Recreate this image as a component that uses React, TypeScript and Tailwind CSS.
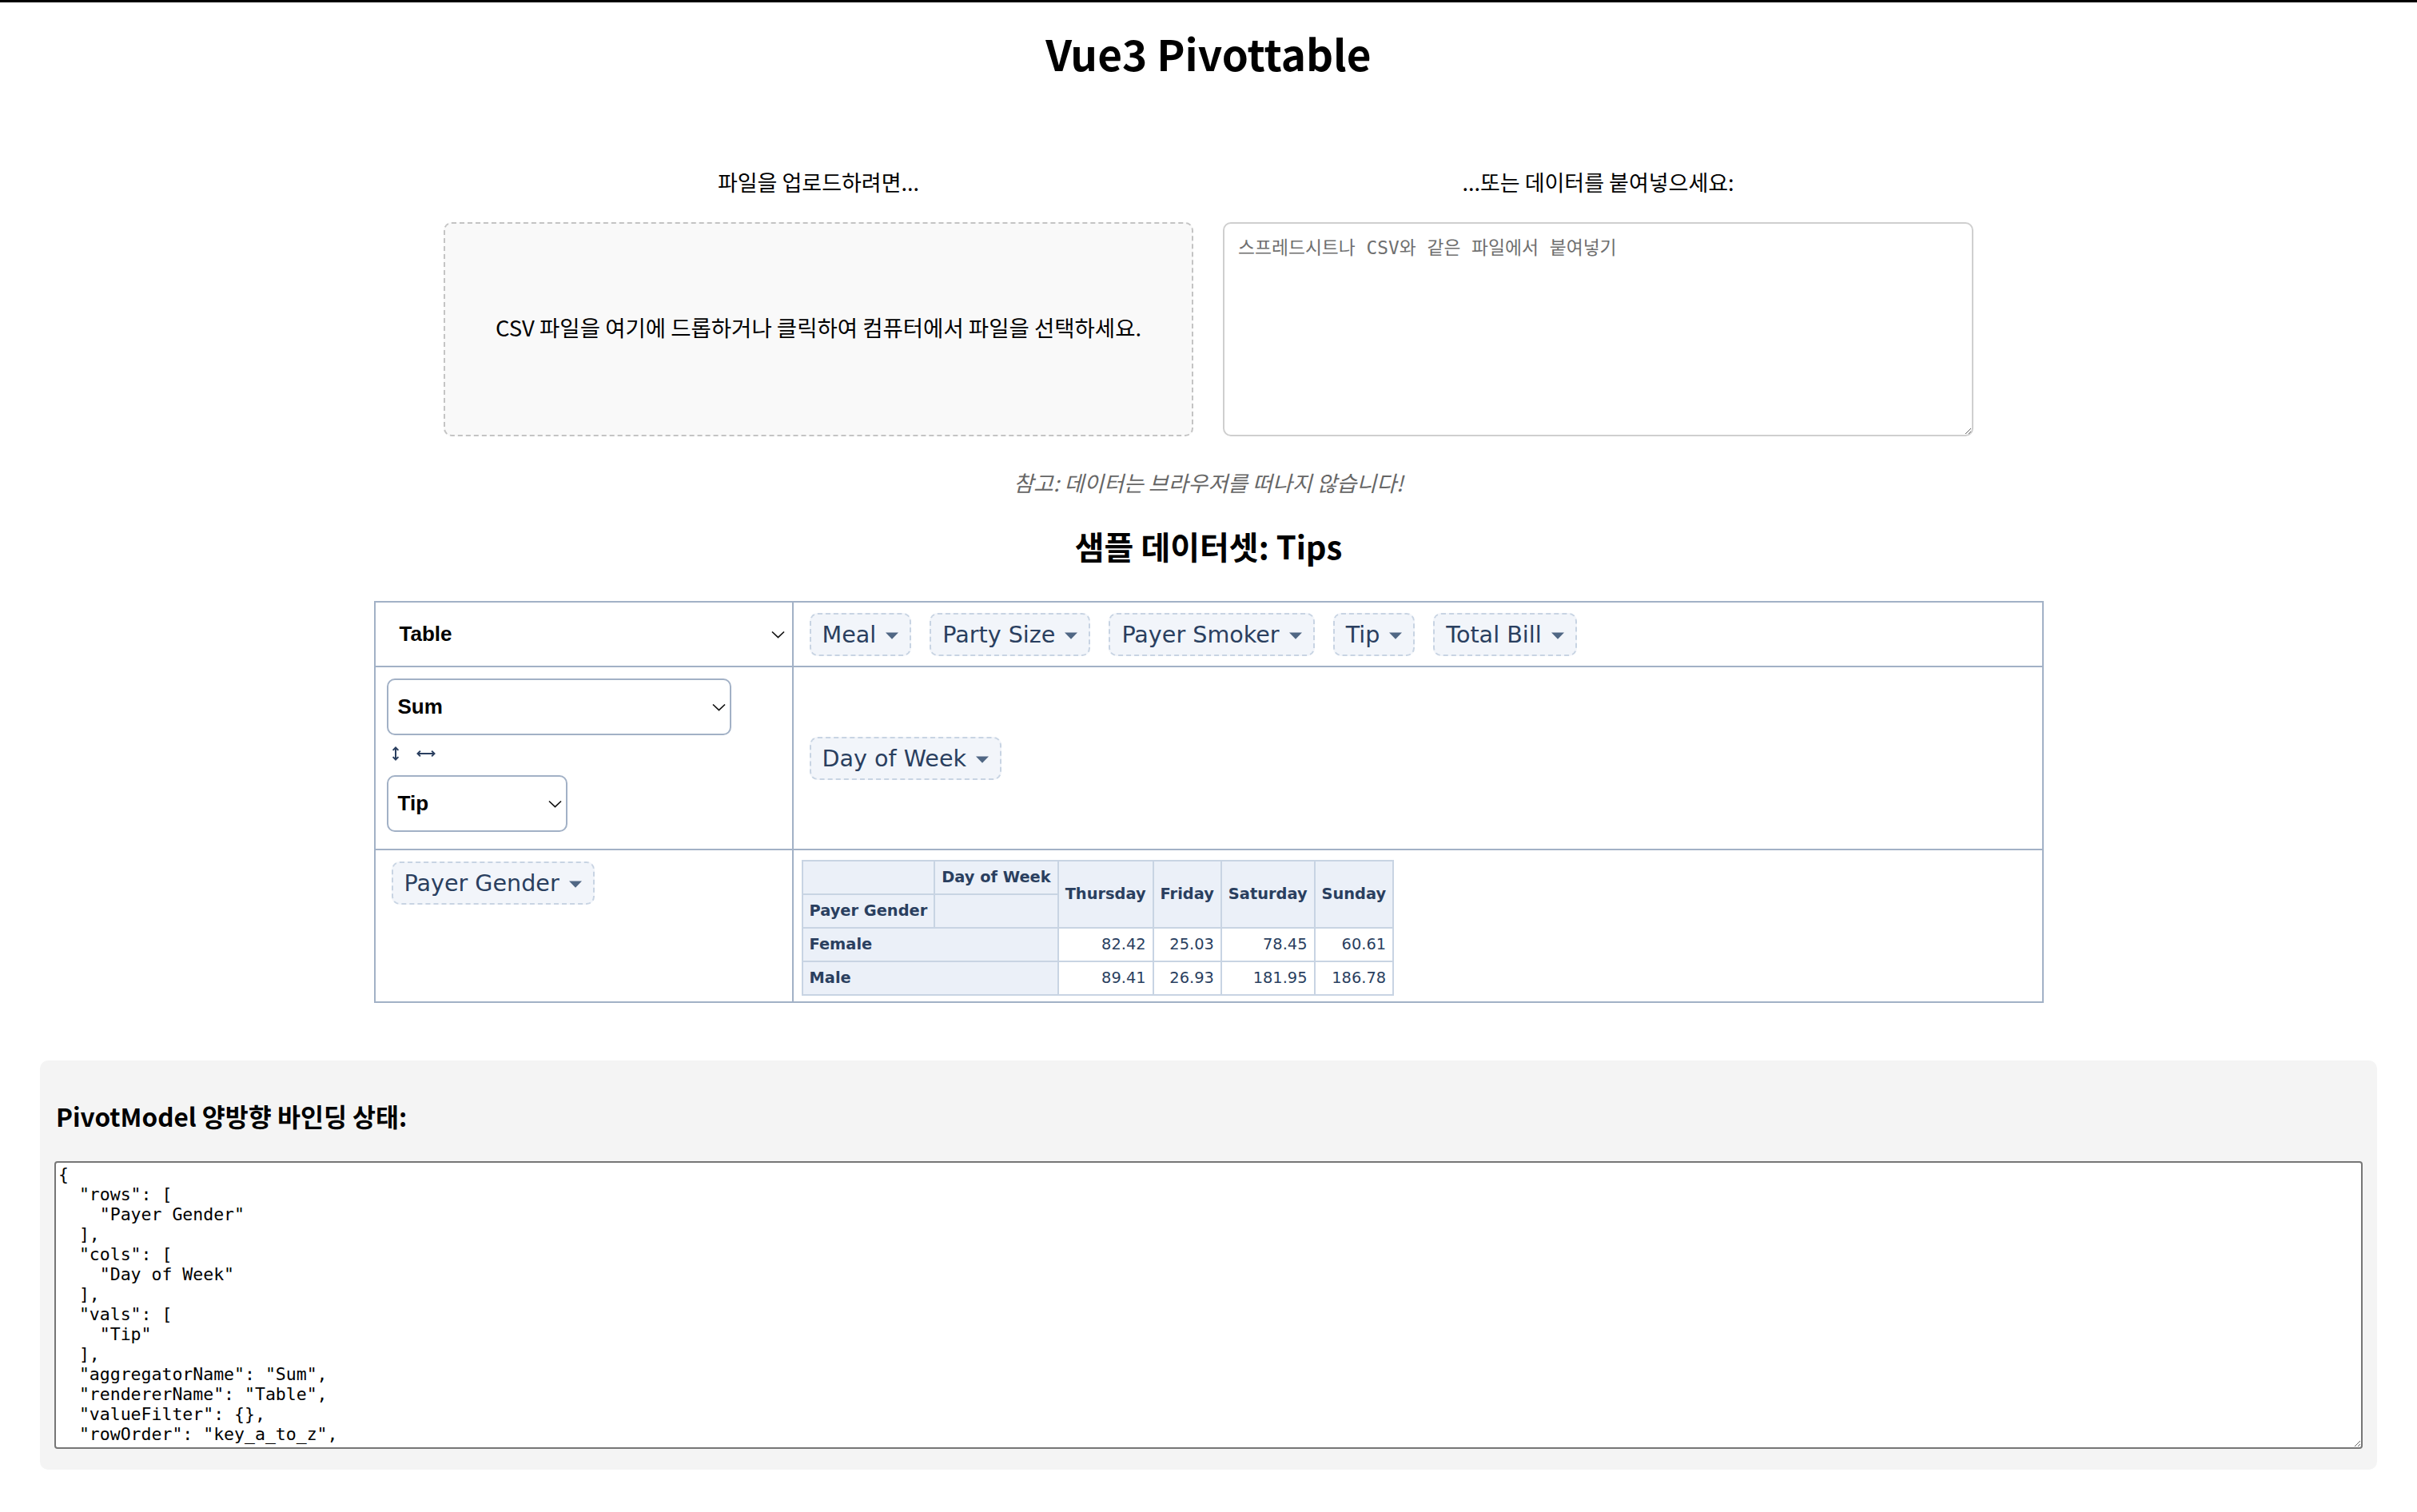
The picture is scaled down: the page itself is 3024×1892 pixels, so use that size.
import React from 'react';

const model = {
  rows: ['Payer Gender'],
  cols: ['Day of Week'],
  vals: ['Tip'],
  aggregatorName: 'Sum',
  rendererName: 'Table',
  valueFilter: {},
  rowOrder: 'key_a_to_z',
  colOrder: 'key_a_to_z',
  hiddenAttributes: [],
  hiddenFromAggregators: [],
  hiddenFromDragDrop: [],
  menuLimit: 500,
};

const unused = ['Meal', 'Party Size', 'Payer Smoker', 'Tip', 'Total Bill'];

const days = ['Thursday', 'Friday', 'Saturday', 'Sunday'];

const body = [
  { label: 'Female', values: ['82.42', '25.03', '78.45', '60.61'] },
  { label: 'Male', values: ['89.41', '26.93', '181.95', '186.78'] },
];

function Caret() {
  return (
    <svg width="16" height="9" viewBox="0 0 16 9" className="mt-[3px] shrink-0">
      <path d="M0 0.5 H16 L8 8.8 Z" fill="#506784" />
    </svg>
  );
}

function Chevron() {
  return (
    <svg width="17" height="10" viewBox="0 0 17 10" className="shrink-0">
      <polyline points="1,1.5 8.5,8.5 16,1.5" fill="none" stroke="#111" strokeWidth="1.7" />
    </svg>
  );
}

function Pill({ label }: { label: string }) {
  return (
    <div className="flex h-[54px] shrink-0 items-center gap-[12px] whitespace-nowrap rounded-[10px] border-2 border-dashed border-[#c8d4e3] bg-[#f2f5fa] px-[14px] font-['DejaVu_Sans',Verdana,sans-serif] text-[28.6px] leading-[32px] text-[#2a3f5f]">
      <span>{label}</span>
      <Caret />
    </div>
  );
}

function SelectBox({ label, width }: { label: string; width: string }) {
  return (
    <div
      className={`flex h-[71px] items-center justify-between rounded-[10px] border-2 border-[#a2b1c6] bg-white pl-[12px] pr-[5px] font-['Liberation_Sans',Arial,sans-serif] text-[26px] font-bold text-black ${width}`}
    >
      <span>{label}</span>
      <Chevron />
    </div>
  );
}

function OutputTable() {
  const th = 'border-2 border-[#c8d4e3] bg-[#ebf0f8] px-[8px] py-[9px] text-left font-bold leading-[22px] whitespace-nowrap';
  const td = 'border-2 border-[#c8d4e3] bg-white px-[8px] py-[9px] text-right leading-[22px] whitespace-nowrap';
  return (
    <table className="border-collapse font-['DejaVu_Sans',Verdana,sans-serif] text-[19.4px] text-[#2a3f5f]">
      <thead>
        <tr>
          <th className={th}></th>
          <th className={th}>Day of Week</th>
          {days.map((d) => (
            <th key={d} rowSpan={2} className={`${th} text-center align-middle`}>
              {d}
            </th>
          ))}
        </tr>
        <tr>
          <th className={th}>Payer Gender</th>
          <th className={th}></th>
        </tr>
      </thead>
      <tbody>
        {body.map((r) => (
          <tr key={r.label}>
            <th colSpan={2} className={th}>
              {r.label}
            </th>
            {r.values.map((v, i) => (
              <td key={i} className={td}>
                {v}
              </td>
            ))}
          </tr>
        ))}
      </tbody>
    </table>
  );
}

export default function App() {
  return (
    <div className="min-h-screen bg-white font-['Noto_Sans_CJK_KR','Noto_Sans',sans-serif] text-black">
      <div className="h-[3px] bg-black" />

      <h1 className="mt-[27px] text-center text-[53px] font-bold leading-[72px]">Vue3 Pivottable</h1>

      <div className="mt-[108px] grid grid-cols-[938px_939px] justify-center gap-x-[37px] gap-y-[32px]">
        <div className="text-center text-[27px] leading-[36px]">파일을 업로드하려면...</div>
        <div className="text-center text-[27px] leading-[36px]">...또는 데이터를 붙여넣으세요:</div>
        <div className="flex h-[268px] items-center justify-center rounded-[10px] border-2 border-dashed border-[#c4c4c4] bg-[#f9f9f9] pb-[4px] text-[27.5px]">
          CSV 파일을 여기에 드롭하거나 클릭하여 컴퓨터에서 파일을 선택하세요.
        </div>
        <textarea
          className="h-[268px] resize overflow-hidden rounded-[10px] border-2 border-[#cfcfcf] bg-white px-[17px] py-[18px] font-['DejaVu_Sans_Mono','Noto_Sans_CJK_KR',monospace] text-[22.8px] leading-[25px] outline-none placeholder:text-[#6f6f6f]"
          placeholder="스프레드시트나 CSV와 같은 파일에서 붙여넣기"
        />
      </div>

      <p className="mt-[41px] text-center text-[27px] italic leading-[34px] text-[#666]">
        참고: 데이터는 브라우저를 떠나지 않습니다!
      </p>

      <h2 className="mt-[36px] text-center text-[40px] font-bold leading-[52px]">샘플 데이터셋: Tips</h2>

      {/* pivot ui */}
      <div className="mx-auto mt-[43px] grid w-[2089px] grid-cols-[523px_1fr] border-2 border-[#a2b1c6]">
        <div className="flex h-[81px] items-center justify-between border-b-2 border-r-2 border-[#a2b1c6] pl-[30px] pr-[9px] font-['Liberation_Sans',Arial,sans-serif] text-[26px] font-bold">
          <span>Table</span>
          <Chevron />
        </div>
        <div className="flex h-[81px] items-center gap-[23px] border-b-2 border-[#a2b1c6] pl-[20px]">
          {unused.map((a) => (
            <Pill key={a} label={a} />
          ))}
        </div>

        <div className="flex h-[229px] flex-col border-b-2 border-r-2 border-[#a2b1c6] px-[14px] pt-[14px]">
          <SelectBox label="Sum" width="w-[431px]" />
          <div className="mt-[14px] flex items-center gap-[21px] pl-[6px]">
            <svg width="10" height="18" viewBox="0 0 10 18">
              <g fill="none" stroke="#2a3f5f" strokeWidth="2">
                <line x1="5" y1="1.5" x2="5" y2="16.5" />
                <polyline points="1.6,4.9 5,1.5 8.4,4.9" />
                <polyline points="1.6,13.1 5,16.5 8.4,13.1" />
              </g>
            </svg>
            <svg width="24" height="10" viewBox="0 0 24 10">
              <g fill="none" stroke="#2a3f5f" strokeWidth="2">
                <line x1="1.5" y1="5" x2="22.5" y2="5" />
                <polyline points="4.9,1.6 1.5,5 4.9,8.4" />
                <polyline points="19.1,1.6 22.5,5 19.1,8.4" />
              </g>
            </svg>
          </div>
          <div className="mt-[18px]">
            <SelectBox label="Tip" width="w-[226px]" />
          </div>
        </div>
        <div className="flex h-[229px] items-center border-b-2 border-[#a2b1c6] pl-[20px]">
          <Pill label="Day of Week" />
        </div>

        <div className="flex h-[189px] items-start border-r-2 border-[#a2b1c6] pl-[20px] pt-[14px]">
          <Pill label="Payer Gender" />
        </div>
        <div className="h-[189px] pl-[10px] pt-[12px]">
          <OutputTable />
        </div>
      </div>

      {/* two-way binding state */}
      <div className="mx-[50px] mt-[72px] rounded-[10px] bg-[#f4f4f4] px-[18px] pb-[26px] pt-[47px]">
        <h3 className="pl-[2px] text-[31.5px] font-bold leading-[44px]">PivotModel 양방향 바인딩 상태:</h3>
        <textarea
          readOnly
          value={JSON.stringify(model, null, 2)}
          className="mt-[35px] block h-[360px] w-full resize overflow-hidden rounded-[4px] border-2 border-[#767676] bg-white px-[3px] py-[2px] font-['DejaVu_Sans_Mono',monospace] text-[21.5px] leading-[25px] text-black outline-none"
        />
      </div>
    </div>
  );
}
